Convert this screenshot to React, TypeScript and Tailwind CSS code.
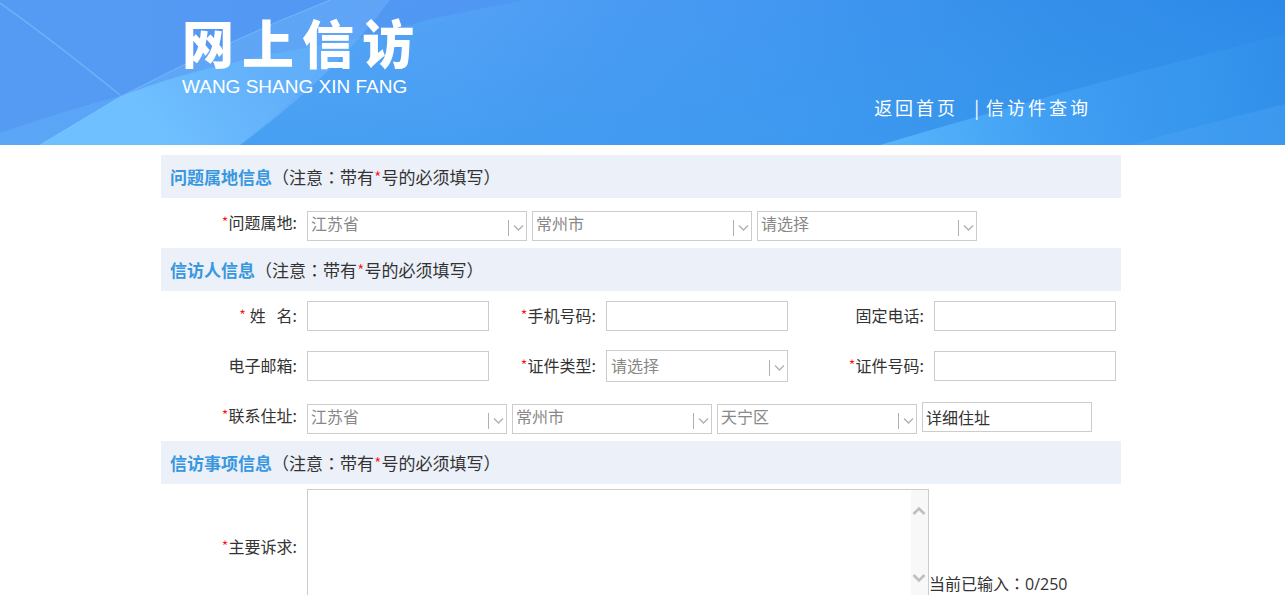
import type { ReactNode } from 'react';

const PROVINCES = ['江苏省'];
const CITIES = ['常州市'];
const DISTRICTS = ['天宁区'];
const PLACEHOLDER = ['请选择'];

function Star() {
  return <span className="font-light text-[#ff0000]">*</span>;
}

// Full-width punctuation that sits in the middle of its box
function Mark({ children }: { children: string }) {
  return <span className="font-['Noto_Sans_CJK_TC',sans-serif]">{children}</span>;
}

function SectionTitle({ title }: { title: string }) {
  return (
    <h2 className="h-[43px] px-[9px] bg-[#ebf0f9] text-[17px] leading-[43px] text-[#333] whitespace-nowrap">
      <span className="font-bold text-[#3897de]">{title}</span>
      <Mark>（</Mark>注意<Mark>：</Mark>带有
      <Star />
      号的必须填写<Mark>）</Mark>
    </h2>
  );
}

function Label({ htmlFor, required, children }: { htmlFor: string; required?: boolean; children: ReactNode }) {
  return (
    <label htmlFor={htmlFor} className="pr-2.5 pb-0.5 text-right text-base text-[#333] whitespace-pre">
      {required && <Star />}
      {children}:
    </label>
  );
}

function TextInput({ id, placeholder }: { id: string; placeholder?: string }) {
  return (
    <input
      id={id}
      type="text"
      placeholder={placeholder}
      aria-label={placeholder}
      className="block w-full h-[30px] px-[3px] border border-[#ccc] bg-white text-base leading-7 text-[#333] placeholder:text-[#333] outline-none"
    />
  );
}

function Select({ id, label, options, tall }: { id: string; label?: string; options: string[]; tall?: boolean }) {
  return (
    <div className="relative w-full">
      <select
        id={id}
        aria-label={label}
        className={`block w-full pr-6 appearance-none border border-[#ccc] bg-white text-base leading-[22px] text-[#888] outline-none ${
          tall ? 'h-8 pl-1 pb-0.5' : 'h-[30px] pl-[3px] pb-1.5'
        }`}
      >
        {options.map((option) => (
          <option key={option}>{option}</option>
        ))}
      </select>
      <svg
        className={`absolute right-0.5 w-[17px] h-[17px] pointer-events-none ${tall ? 'bottom-[5px]' : 'bottom-1'}`}
        viewBox="0 0 17 17"
        fill="none"
        stroke="#b0b0b0"
      >
        <path d="M0.5 0v16" />
        <path d="M6 5.5l4.5 4.5L15 5.5" strokeWidth={1.3} />
      </svg>
    </div>
  );
}

function HeaderBackdrop() {
  return (
    <svg className="absolute inset-0 w-full h-full" viewBox="0 0 1285 145" preserveAspectRatio="none" aria-hidden="true">
      <defs>
        <linearGradient id="base" x1="0" y1="0" x2="1" y2="0">
          <stop offset="0" stopColor="#569bf3" />
          <stop offset="0.35" stopColor="#5197f3" />
          <stop offset="0.6" stopColor="#4397f1" />
          <stop offset="0.8" stopColor="#3490ea" />
          <stop offset="1" stopColor="#2d89e8" />
        </linearGradient>
        <linearGradient id="sweep" gradientUnits="userSpaceOnUse" x1="0" y1="0" x2="900" y2="0">
          <stop offset="0" stopColor="#62b0fb" stopOpacity="0.5" />
          <stop offset="0.3" stopColor="#58acf8" stopOpacity="0.65" />
          <stop offset="0.5" stopColor="#54a4f7" stopOpacity="0.8" />
          <stop offset="1" stopColor="#3a96ee" stopOpacity="0" />
        </linearGradient>
        <linearGradient id="shade" x1="0" y1="0" x2="0" y2="1">
          <stop offset="0" stopColor="#3a9bee" stopOpacity="0" />
          <stop offset="1" stopColor="#3a9bee" stopOpacity="0.55" />
        </linearGradient>
        <linearGradient id="band" gradientUnits="userSpaceOnUse" x1="120" y1="145" x2="360" y2="0">
          <stop offset="0" stopColor="#74c2ff" stopOpacity="0.3" />
          <stop offset="1" stopColor="#74b8fc" stopOpacity="0.4" />
        </linearGradient>
        <linearGradient id="glow" gradientUnits="userSpaceOnUse" x1="170" y1="145" x2="320" y2="40">
          <stop offset="0" stopColor="#70c2ff" stopOpacity="0.9" />
          <stop offset="0.5" stopColor="#68b8fd" stopOpacity="0.6" />
          <stop offset="1" stopColor="#60aef8" stopOpacity="0.1" />
        </linearGradient>
        <linearGradient id="wing" gradientUnits="userSpaceOnUse" x1="880" y1="145" x2="1285" y2="60">
          <stop offset="0" stopColor="#58b6fc" />
          <stop offset="0.4" stopColor="#41a0f3" />
          <stop offset="1" stopColor="#308fe9" />
        </linearGradient>
      </defs>
      <path fill="url(#base)" d="M0 0h1285v145H0z" />
      <path fill="url(#sweep)" d="M0 133Q60 112 120 96Q210 62 335 43Q385 33 430 19L525 0H1285V145H0z" />
      <path fill="url(#shade)" d="M240 145Q335 75 390 0H1285V145z" />
      <path fill="url(#band)" d="M40 145L120 97Q225 42 330 0H390Q335 75 240 145z" />
      <path fill="url(#glow)" d="M40 145L120 97Q200 64 340 43Q300 98 240 145z" />
      <path fill="none" stroke="#8cc8ff" strokeOpacity="0.55" d="M40 145L120 97Q225 42 330 0" />
      <path fill="none" stroke="#8cc8ff" strokeOpacity="0.5" strokeWidth={1.5} d="M0 3Q55 42 120 95" />
      <path fill="none" stroke="#8cc8ff" strokeOpacity="0.2" strokeWidth={1.5} d="M120 95L180 145" />
      <path fill="url(#wing)" d="M880 145Q1040 97 1285 34V145z" />
      <path fill="#4aa6f6" fillOpacity="0.4" d="M1130 145Q1210 122 1285 104V145z" />
    </svg>
  );
}

export default function App() {
  return (
    <div className="h-screen overflow-y-auto [scrollbar-width:none] bg-white font-['Noto_Sans_CJK_SC',sans-serif]">
      <header className="relative h-[145px] pr-[3px] overflow-hidden">
        <HeaderBackdrop />
        <div className="relative max-w-[960px] h-full mx-auto pl-[21px] pr-[30px] flex justify-between text-white">
          <div className="pt-2.5">
            <h1 className="flex gap-2 text-[52px] leading-[64px] font-black">
              <span>网</span>
              <span>上</span>
              <span>信</span>
              <span>访</span>
            </h1>
            <p className="font-['Liberation_Sans',sans-serif] text-[19px] leading-[26px]">WANG SHANG XIN FANG</p>
          </div>
          <nav className="self-end pb-[25px] flex text-lg leading-[26px] tracking-[3px] whitespace-nowrap">
            <a href="#home" className="pr-4">返回首页</a>
            <span className="pr-1">|</span>
            <a href="#query">信访件查询</a>
          </nav>
        </div>
      </header>

      <main className="pt-2.5 pr-[3px]">
        <form className="max-w-[960px] mx-auto">
          <SectionTitle title="问题属地信息" />
          <div className="grid grid-cols-[146px_1fr] items-center h-[50px]">
            <Label htmlFor="province" required>问题属地</Label>
            <div className="flex gap-[5px] max-w-[670px] pt-1.5">
              <Select id="province" options={PROVINCES} />
              <Select id="city" label="城市" options={CITIES} />
              <Select id="district" label="区县" options={PLACEHOLDER} />
            </div>
          </div>

          <SectionTitle title="信访人信息" />
          <div className="grid grid-cols-[146px_1fr_117px_1fr_146px_1fr] auto-rows-[50px] items-center pr-[5px]">
            <Label htmlFor="name" required>{' 姓   名'}</Label>
            <TextInput id="name" />
            <Label htmlFor="mobile" required>手机号码</Label>
            <TextInput id="mobile" />
            <Label htmlFor="phone">固定电话</Label>
            <TextInput id="phone" />

            <Label htmlFor="email">电子邮箱</Label>
            <TextInput id="email" />
            <Label htmlFor="id-type" required>证件类型</Label>
            <Select id="id-type" options={PLACEHOLDER} tall />
            <Label htmlFor="id-number" required>证件号码</Label>
            <TextInput id="id-number" />
          </div>
          <div className="grid grid-cols-[146px_1fr] items-center h-[50px]">
            <Label htmlFor="addr-province" required>联系住址</Label>
            <div className="flex items-center gap-[5px]">
              <div className="flex gap-[5px] w-[610px] pt-1.5">
                <Select id="addr-province" options={PROVINCES} />
                <Select id="addr-city" label="住址城市" options={CITIES} />
                <Select id="addr-district" label="住址区县" options={DISTRICTS} />
              </div>
              <div className="w-[170px] pt-0.5">
                <TextInput id="addr-detail" placeholder="详细住址" />
              </div>
            </div>
          </div>

          <SectionTitle title="信访事项信息" />
          <div className="grid grid-cols-[146px_1fr] items-center pt-[5px]">
            <Label htmlFor="appeal" required>主要诉求</Label>
            <div className="flex items-end">
              <div className="flex w-[622px] h-[116px] border border-[#ccc]">
                <textarea id="appeal" className="block flex-1 px-1 resize-none bg-white text-base text-[#333] outline-none" />
                <div className="flex flex-col justify-between w-[17px] pt-[15px] pb-5 bg-[#f8f8f8]">
                  <svg className="w-4 h-3" viewBox="0 0 16 12" fill="none" stroke="#bfbfbf" strokeWidth={2.6}>
                    <path d="M2.5 9L8 3.5L13.5 9" />
                  </svg>
                  <svg className="w-4 h-3" viewBox="0 0 16 12" fill="none" stroke="#bfbfbf" strokeWidth={2.6}>
                    <path d="M2.5 3L8 8.5L13.5 3" />
                  </svg>
                </div>
              </div>
              <p className="pb-[9px] text-base text-[#333] whitespace-nowrap">
                当前已输入<Mark>：</Mark>
                <span className="font-['Open_Sans',sans-serif]">0/250</span>
              </p>
            </div>
          </div>
        </form>
      </main>
    </div>
  );
}
